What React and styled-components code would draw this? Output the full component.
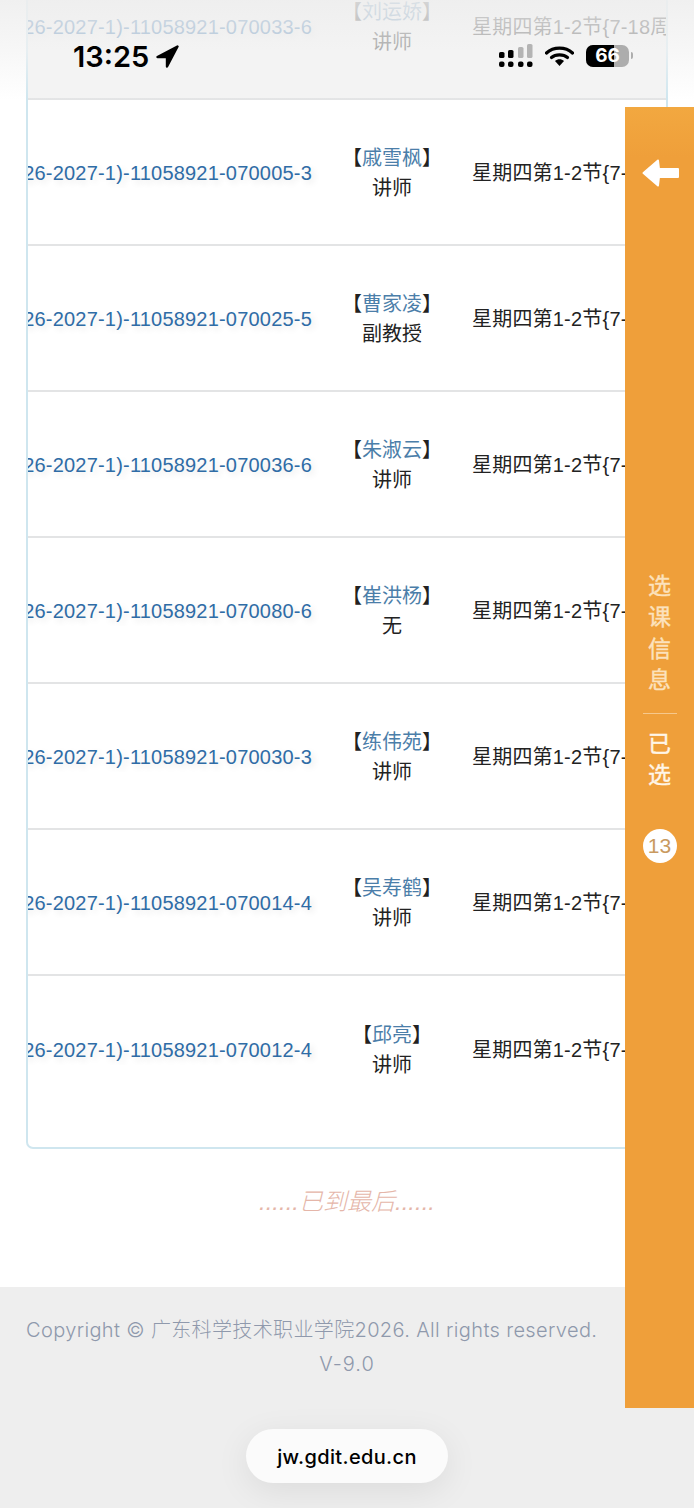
import styled, { createGlobalStyle } from 'styled-components'

const GlobalStyle = createGlobalStyle`
  html, body {
    margin: 0;
    padding: 0;
    background: #fff;
  }
  body {
    font-family: "Liberation Sans", "Noto Sans CJK SC", sans-serif;
  }
`

const courses = [
  { code: '(2026-2027-1)-11058921-070033-6', name: '刘运娇', title: '讲师', time: '星期四第1-2节{7-18周}', shaded: true },
  { code: '(2026-2027-1)-11058921-070005-3', name: '戚雪枫', title: '讲师', time: '星期四第1-2节{7-18周}' },
  { code: '(2026-2027-1)-11058921-070025-5', name: '曹家凌', title: '副教授', time: '星期四第1-2节{7-18周}' },
  { code: '(2026-2027-1)-11058921-070036-6', name: '朱淑云', title: '讲师', time: '星期四第1-2节{7-18周}' },
  { code: '(2026-2027-1)-11058921-070080-6', name: '崔洪杨', title: '无', time: '星期四第1-2节{7-18周}' },
  { code: '(2026-2027-1)-11058921-070030-3', name: '练伟苑', title: '讲师', time: '星期四第1-2节{7-18周}' },
  { code: '(2026-2027-1)-11058921-070014-4', name: '吴寿鹤', title: '讲师', time: '星期四第1-2节{7-18周}' },
  { code: '(2026-2027-1)-11058921-070012-4', name: '邱亮', title: '讲师', time: '星期四第1-2节{7-18周}', last: true },
]

export default function App() {
  return (
    <Page>
      <GlobalStyle />
      <Panel>
        {courses.map((c) => (
          <Row key={c.code} $shaded={c.shaded} $last={c.last}>
            <CodeCell>
              <CodeLink>{c.code}</CodeLink>
            </CodeCell>
            <TeacherCell>
              <TeacherName>
                【<b>{c.name}</b>】
              </TeacherName>
              <div>{c.title}</div>
            </TeacherCell>
            <TimeCell>{c.time}</TimeCell>
          </Row>
        ))}
      </Panel>

      <EndNote>......已到最后......</EndNote>

      <Footer>
        <CopyrightLine>Copyright © 广东科学技术职业学院2026. All rights reserved.</CopyrightLine>
        <VersionLine>V-9.0</VersionLine>
      </Footer>

      <TopFade />
      <StatusBar>
        <Clock>
          13:25
          <svg width="23" height="23" viewBox="0 0 23 23">
            <path d="M21.5 1.5 L1.5 12 L11 12 L11 21.5 Z" fill="#000" stroke="#000" strokeWidth="2.4" strokeLinejoin="round" />
          </svg>
        </Clock>
        <StatusIcons>
          <svg width="34" height="23" viewBox="0 0 34 23">
            <rect x="0" y="8" width="5.5" height="6" rx="1.6" fill="#000" />
            <rect x="9" y="6" width="5.5" height="8" rx="1.6" fill="#000" />
            <rect x="19" y="3" width="5.5" height="11" rx="1.6" fill="#b4b4b4" />
            <rect x="28" y="0" width="5.5" height="14" rx="1.6" fill="#b4b4b4" />
            <rect x="0" y="17.5" width="5.5" height="5.5" rx="2" fill="#000" />
            <rect x="9" y="17.5" width="5.5" height="5.5" rx="2" fill="#000" />
            <rect x="19" y="17.5" width="5.5" height="5.5" rx="2" fill="#000" />
            <rect x="28" y="17.5" width="5.5" height="5.5" rx="2" fill="#000" />
          </svg>
          <svg width="29" height="20" viewBox="0 0 29 20">
            <path d="M1.5 7 C8.5 0.5 20.5 0.5 27.5 7" fill="none" stroke="#000" strokeWidth="3.2" strokeLinecap="round" />
            <path d="M6.5 11.5 C10.5 8 18.5 8 22.5 11.5" fill="none" stroke="#000" strokeWidth="3.2" strokeLinecap="round" />
            <path d="M10 15 C12.5 12.8 16.5 12.8 19 15 L14.5 20 Z" fill="#000" />
          </svg>
          <Battery>
            <BatteryShell>
              <BatteryFill style={{ width: '66%' }} />
              <BatteryLevel>66</BatteryLevel>
            </BatteryShell>
            <BatteryNub />
          </Battery>
        </StatusIcons>
      </StatusBar>

      <SideBar>
        <svg width="37" height="28" viewBox="0 0 37 28">
          <path d="M16 1.5 L1.5 14 L16 26.5 L17 18 L36 18 L36 10 L17 10 Z" fill="#fff" stroke="#fff" strokeWidth="2" strokeLinejoin="round" />
        </svg>
        <SideLabel $first>选课信息</SideLabel>
        <SideDivider />
        <SideLabel $bright>已选</SideLabel>
        <CountBadge>13</CountBadge>
      </SideBar>

      <UrlPill>jw.gdit.edu.cn</UrlPill>
    </Page>
  )
}

const Page = styled.div`
  position: relative;
  width: 694px;
  height: 1508px;
  overflow: hidden;
  background: #fff;
`

const Panel = styled.div`
  box-sizing: border-box;
  width: 642px;
  height: 1195px;
  margin: -46px 0 0 26px;
  background: #fff;
  border: 2px solid #cfe6ef;
  border-top: 0;
  border-radius: 0 0 7px 7px;
  overflow: hidden;
`

const Row = styled.div`
  display: grid;
  grid-template-columns: 304px 120px 1fr;
  align-items: center;
  box-sizing: border-box;
  height: 146px;
  padding-top: 2px;
  font-size: 20px;
  line-height: 30px;
  color: #222;
  background: ${(p) => (p.$shaded ? '#f3f3f3' : '#fff')};
  border-bottom: ${(p) => (p.$last ? '0' : '2px solid #e3e4e5')};
`

const CodeCell = styled.div`
  display: flex;
  justify-content: flex-end;
  padding-right: 20px;
  overflow: hidden;
  white-space: nowrap;
`

const CodeLink = styled.span`
  flex: none;
  letter-spacing: 0.2px;
  color: #2f6ca6;
  text-shadow: 3px 3px 6px rgba(0, 0, 0, 0.1);
`

const TeacherCell = styled.div`
  text-align: center;
  white-space: nowrap;
`

const TeacherName = styled.div`
  b {
    font-weight: 400;
    color: #4b7ea9;
  }
`

const TimeCell = styled.div`
  padding-left: 20px;
  letter-spacing: 0.2px;
  white-space: nowrap;
  overflow: hidden;
`

const EndNote = styled.div`
  box-sizing: border-box;
  height: 138px;
  padding-top: 38px;
  text-align: center;
  font-size: 24px;
  line-height: 30px;
  font-style: italic;
  font-weight: 300;
  color: #e5b6a9;
`

const Footer = styled.div`
  box-sizing: border-box;
  height: 221px;
  padding-top: 26px;
  background: #eeeeee;
  font-family: Inter, "Noto Sans CJK SC", sans-serif;
  font-size: 20px;
  font-weight: 300;
  line-height: 34px;
  color: #8f99ac;
`

const CopyrightLine = styled.div`
  padding-left: 26px;
  letter-spacing: 0.36px;
  white-space: nowrap;
`

const VersionLine = styled.div`
  text-align: center;
  letter-spacing: 1px;
`

const TopFade = styled.div`
  position: absolute;
  top: 0;
  left: 0;
  right: 0;
  height: 100px;
  background: linear-gradient(
    to bottom,
    rgba(238, 238, 238, 0.88) 0%,
    rgba(243, 243, 243, 0.68) 50%,
    rgba(255, 255, 255, 0) 100%
  );
`

const StatusBar = styled.div`
  position: absolute;
  top: 44px;
  left: 73px;
  width: 560px;
  display: flex;
  justify-content: space-between;
  align-items: flex-start;
`

const Clock = styled.div`
  display: flex;
  align-items: center;
  gap: 7px;
  height: 25px;
  font-family: Inter, sans-serif;
  font-size: 29px;
  font-weight: 600;
  color: #000;
`

const StatusIcons = styled.div`
  display: flex;
  align-items: center;
  gap: 12px;
`

const Battery = styled.div`
  display: flex;
  align-items: center;
  gap: 2px;
`

const BatteryShell = styled.div`
  position: relative;
  width: 43px;
  height: 22px;
  border-radius: 7px;
  overflow: hidden;
  background: #adadad;
`

const BatteryFill = styled.div`
  height: 100%;
  background: #000;
`

const BatteryLevel = styled.div`
  position: absolute;
  inset: 0;
  text-align: center;
  font-family: Inter, sans-serif;
  font-size: 19px;
  font-weight: 700;
  line-height: 22px;
  color: #fff;
`

const BatteryNub = styled.div`
  width: 2px;
  height: 7px;
  border-radius: 0 2px 2px 0;
  background: #adadad;
`

const SideBar = styled.div`
  position: absolute;
  top: 107px;
  left: 625px;
  box-sizing: border-box;
  width: 69px;
  height: 1301px;
  padding-top: 52px;
  display: flex;
  flex-direction: column;
  align-items: center;
  background: linear-gradient(to bottom, #f2a840 0, #ef9f3a 50px);

  & > svg {
    margin-left: 1px;
  }
`

const SideLabel = styled.div`
  width: 24px;
  margin-top: ${(p) => (p.$first ? '384px' : '15px')};
  font-size: 23px;
  line-height: 31.4px;
  text-align: center;
  -webkit-text-stroke: 0.4px currentColor;
  color: ${(p) => (p.$bright ? '#fff6e8' : '#fce2bd')};
`

const SideDivider = styled.div`
  width: 34px;
  height: 1px;
  margin-top: 16px;
  background: #f6c88c;
`

const CountBadge = styled.div`
  width: 34px;
  height: 34px;
  margin-top: 38px;
  border-radius: 50%;
  background: #fff;
  text-align: center;
  font-size: 21px;
  line-height: 34px;
  color: #c99a5f;
`

const UrlPill = styled.div`
  position: absolute;
  left: 246px;
  top: 1429px;
  width: 202px;
  height: 54px;
  border-radius: 27px;
  background: #fbfbfb;
  box-shadow: 0 8px 34px rgba(0, 0, 0, 0.08);
  text-align: center;
  font-family: Inter, sans-serif;
  font-size: 20px;
  font-weight: 500;
  letter-spacing: 0.35px;
  line-height: 56px;
  color: #000;
`
